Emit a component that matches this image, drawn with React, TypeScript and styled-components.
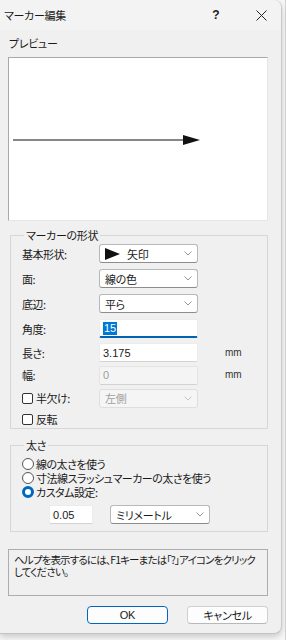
import styled, { createGlobalStyle } from "styled-components"

const GlobalStyle = createGlobalStyle`
  html, body {
    margin: 0;
    padding: 0;
    background: #f7f7f7;
  }
  * {
    box-sizing: border-box;
  }
`

const Screen = styled.div`
  width: 286px;
  height: 640px;
  background: #f7f7f7;
  border-right: 1px solid #d0d0d0;
  font-family: "Noto Sans CJK JP", "Noto Sans", sans-serif;
  font-feature-settings: "palt";
  font-size: 11px;
  color: #1a1a1a;
  overflow: hidden;
`

const Dialog = styled.div`
  width: 282px;
  height: 634px;
  background: #f0f0f0;
  border-radius: 0 8px 8px 0;
  border-right: 1px solid #c9c9c9;
  border-bottom: 1px solid #c4c4c4;
  box-shadow: 0 3px 6px rgba(0, 0, 0, 0.18);
  display: flex;
  flex-direction: column;
`

const TitleBar = styled.div`
  height: 30px;
  display: flex;
  align-items: center;
  padding-left: 4px;
  background: #f3f3f3;
  border-radius: 0 8px 0 0;
`

const Title = styled.span`
  flex: 1;
  font-size: 11px;
  letter-spacing: -0.3px;
`

const HelpMark = styled.span`
  width: 16px;
  margin-right: 27px;
  text-align: center;
  font-family: "Liberation Sans", sans-serif;
  font-weight: bold;
  font-size: 12px;
`

const CloseMark = styled.span`
  width: 20px;
  margin-right: 10px;
  display: flex;
  justify-content: center;
`

const Body = styled.div`
  padding: 6px 13px 0 8px;
  display: flex;
  flex-direction: column;
`

const SectionLabel = styled.div`
  height: 14px;
  line-height: 14px;
  padding-left: 1px;
  letter-spacing: -0.3px;
`

const Preview = styled.div`
  margin-top: 7px;
  height: 164px;
  background: #ffffff;
  border-top: 1px solid #a8a8a8;
  border-left: 1px solid #a8a8a8;
  border-right: 1px solid #e6e6e6;
  border-bottom: 1px solid #e6e6e6;
  display: flex;
  align-items: center;
  padding: 2px 0 0 4px;
`

const Group = styled.fieldset<{ $top: number }>`
  margin: ${(p) => p.$top}px 0 0 2px;
  padding: 0 0 0 11px;
  border: 1px solid #d6d6d6;
  min-width: 0;
`

const Legend = styled.legend`
  padding: 0 2px;
  margin-left: 2px;
  line-height: 12px;
  height: 12px;
  letter-spacing: -0.3px;
`

const Row = styled.div<{ $h: number }>`
  height: ${(p) => p.$h}px;
  line-height: 14px;
  display: flex;
  align-items: center;
`

const FieldLabel = styled.span`
  width: 77px;
  letter-spacing: -0.5px;
`

const Select = styled.div<{ $w: number; $disabled?: boolean }>`
  width: ${(p) => p.$w}px;
  height: 19px;
  border: 1px solid ${(p) => (p.$disabled ? "#dedede" : "#b8b8b8")};
  border-bottom-color: ${(p) => (p.$disabled ? "#dedede" : "#8c8c8c")};
  border-radius: 3px;
  background: ${(p) => (p.$disabled ? "#f5f5f5" : "#ffffff")};
  color: ${(p) => (p.$disabled ? "#a0a0a0" : "#1a1a1a")};
  display: flex;
  align-items: center;
  padding: 0 5px 0 5px;
  letter-spacing: -0.3px;
`

const SelectText = styled.span`
  flex: 1;
  display: flex;
  align-items: center;
  gap: 6px;
`

const TextBox = styled.div<{ $w: number; $focus?: boolean; $disabled?: boolean }>`
  width: ${(p) => p.$w}px;
  height: 19px;
  background: ${(p) => (p.$disabled ? "#f4f4f4" : "#ffffff")};
  border: 1px solid ${(p) => (p.$disabled ? "#e4e4e4" : "#ececec")};
  border-bottom: ${(p) => (p.$focus ? "2px solid #0063b1" : "1px solid #d2d2d2")};
  border-radius: 2px;
  color: ${(p) => (p.$disabled ? "#a0a0a0" : "#1a1a1a")};
  font-family: "Liberation Sans", sans-serif;
  font-size: 11px;
  display: flex;
  align-items: center;
  padding-left: 3px;
`

const Selected = styled.span`
  background: #0078d7;
  color: #ffffff;
  padding: 0 1px;
  line-height: 13px;
`

const Unit = styled.span`
  margin-left: 27px;
  font-family: "Liberation Sans", sans-serif;
  font-size: 10px;
  color: #333333;
`

const Check = styled.span`
  width: 11px;
  height: 11px;
  border: 1px solid #333333;
  border-radius: 2px;
  background: #ffffff;
  margin-right: 3px;
`

const CheckLabel = styled.span`
  width: 63px;
  letter-spacing: -0.5px;
`

const Radio = styled.span<{ $on?: boolean }>`
  width: 12px;
  height: 12px;
  border-radius: 50%;
  margin-right: 2px;
  background: #ffffff;
  border: ${(p) => (p.$on ? "3px solid #0067c0" : "1px solid #555555")};
`

const RadioLabel = styled.span`
  letter-spacing: -0.5px;
`

const SizeRow = styled.div`
  margin: 6px 0 7px 27px;
  display: flex;
  align-items: center;
  gap: 17px;
`

const HelpBox = styled.div`
  margin-top: 17px;
  height: 47px;
  border: 1px solid #adadad;
  padding: 4px 2px 0 5px;
  line-height: 12px;
  font-size: 10.5px;
  letter-spacing: -0.85px;
  white-space: nowrap;
`

const Buttons = styled.div`
  margin-top: 10px;
  display: flex;
  justify-content: flex-end;
  gap: 19px;
`

const Button = styled.div<{ $primary?: boolean }>`
  width: 81px;
  height: 18px;
  border-radius: 4px;
  background: #fdfdfd;
  border: 1px solid ${(p) => (p.$primary ? "#0067c0" : "#d0d0d0")};
  border-bottom-color: ${(p) => (p.$primary ? "#0067c0" : "#b8b8b8")};
  display: flex;
  align-items: center;
  justify-content: center;
  letter-spacing: -0.3px;
  font-family: ${(p) => (p.$primary ? `"Liberation Sans", sans-serif` : "inherit")};
`

function Chevron({ color = "#8a8a8a" }: { color?: string }) {
  return (
    <svg width="8" height="5" viewBox="0 0 8 5">
      <polyline points="0.5,0.5 4,4 7.5,0.5" fill="none" stroke={color} strokeWidth="0.9" />
    </svg>
  )
}

function DropDown({ w, children, disabled }: { w: number; children: React.ReactNode; disabled?: boolean }) {
  return (
    <Select $w={w} $disabled={disabled}>
      <SelectText>{children}</SelectText>
      <Chevron color={disabled ? "#c0c0c0" : "#8a8a8a"} />
    </Select>
  )
}

export default function App() {
  return (
    <Screen>
      <GlobalStyle />
      <Dialog>
        <TitleBar>
          <Title>マーカー編集</Title>
          <HelpMark>?</HelpMark>
          <CloseMark>
            <svg width="11" height="11" viewBox="0 0 11 11">
              <path d="M0.5 0.5 L10.5 10.5 M10.5 0.5 L0.5 10.5" stroke="#222" strokeWidth="1" />
            </svg>
          </CloseMark>
        </TitleBar>
        <Body>
          <SectionLabel>プレビュー</SectionLabel>
          <Preview>
            <svg width="200" height="14" viewBox="0 0 200 14">
              <line x1="0" y1="7" x2="175" y2="7" stroke="#111" strokeWidth="1.2" />
              <polygon points="170,2 187,7 170,12" fill="#111" />
            </svg>
          </Preview>

          <Group $top={8}>
            <Legend>マーカーの形状</Legend>
            <Row $h={25}>
              <FieldLabel>基本形状:</FieldLabel>
              <DropDown w={99}>
                <svg width="16" height="12" viewBox="0 0 16 12">
                  <polygon points="0,0 15,6 0,12" fill="#111" />
                </svg>
                矢印
              </DropDown>
            </Row>
            <Row $h={25}>
              <FieldLabel>面:</FieldLabel>
              <DropDown w={99}>線の色</DropDown>
            </Row>
            <Row $h={25}>
              <FieldLabel>底辺:</FieldLabel>
              <DropDown w={99}>平ら</DropDown>
            </Row>
            <Row $h={25}>
              <FieldLabel>角度:</FieldLabel>
              <TextBox $w={99} $focus>
                <Selected>15</Selected>
              </TextBox>
            </Row>
            <Row $h={23}>
              <FieldLabel>長さ:</FieldLabel>
              <TextBox $w={99}>3.175</TextBox>
              <Unit>mm</Unit>
            </Row>
            <Row $h={22}>
              <FieldLabel>幅:</FieldLabel>
              <TextBox $w={99} $disabled>
                0
              </TextBox>
              <Unit>mm</Unit>
            </Row>
            <Row $h={24}>
              <Check />
              <CheckLabel>半欠け:</CheckLabel>
              <DropDown w={99} disabled>
                左側
              </DropDown>
            </Row>
            <Row $h={18}>
              <Check />
              <CheckLabel>反転</CheckLabel>
            </Row>
          </Group>

          <Group $top={10}>
            <Legend>太さ</Legend>
            <Row $h={14} style={{ marginTop: 6 }}>
              <Radio />
              <RadioLabel>線の太さを使う</RadioLabel>
            </Row>
            <Row $h={14}>
              <Radio />
              <RadioLabel>寸法線スラッシュマーカーの太さを使う</RadioLabel>
            </Row>
            <Row $h={14}>
              <Radio $on />
              <RadioLabel>カスタム設定:</RadioLabel>
            </Row>
            <SizeRow>
              <TextBox $w={44}>0.05</TextBox>
              <DropDown w={100}>ミリメートル</DropDown>
            </SizeRow>
          </Group>

          <HelpBox>
            ヘルプを表示するには、F1キーまたは「?」アイコンをクリック
            <br />
            してください。
          </HelpBox>

          <Buttons>
            <Button $primary>OK</Button>
            <Button>キャンセル</Button>
          </Buttons>
        </Body>
      </Dialog>
    </Screen>
  )
}
